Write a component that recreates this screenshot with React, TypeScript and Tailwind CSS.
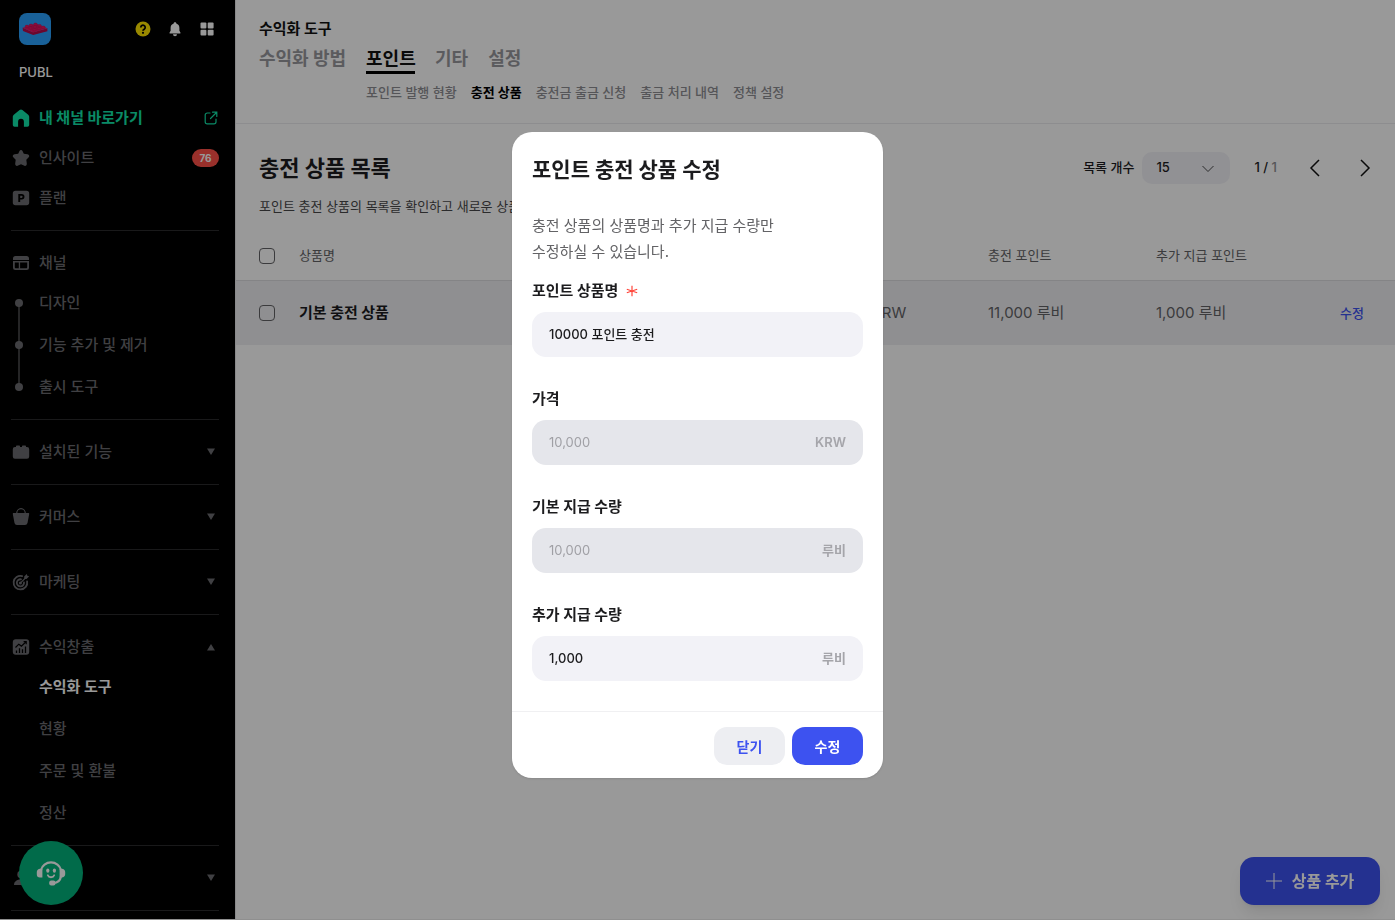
import type { ReactNode } from 'react'

type MenuItem = {
	label: string
	icon: ReactNode
	state?: 'open' | 'closed'
}

function Icon({ children }: { children: ReactNode }) {
	return (
		<svg
			viewBox="0 0 20 20"
			className="h-5 w-5 shrink-0"
			fill="currentColor"
			aria-hidden="true"
		>
			{children}
		</svg>
	)
}

const homeIcon = (
	<Icon>
		<path d="M8.600 2.100a2.200 2.200 0 0 1 2.800 0l5.500 4.300c.9.7 1.300 1.600 1.300 2.600v7.800c0 1.200-.7 1.900-1.800 1.900h-3.500v-5a2.900 2.900 0 0 0-5.800 0v5H3.600c-1.100 0-1.800-.7-1.800-1.900V9c0-1 .4-1.900 1.300-2.600z" />
	</Icon>
)

const starIcon = (
	<Icon>
		<path d="M8.500 3c.6-1.300 2.400-1.300 3 0l1.300 2.700 3.700.5c1.700.2 2.300 1.900 1.200 3.100l-2.400 2.500.5 3.700c.2 1.900-1.300 2.900-2.900 2.100L10 16.300l-2.900 1.300c-1.600.8-3.100-.2-2.900-2.100l.5-3.700-2.400-2.500C1.200 8.100 1.800 6.400 3.500 6.200l3.700-.5z" />
	</Icon>
)

const planIcon = (
	<Icon>
		<path
			fillRule="evenodd"
			d="M4.500 2.800h11a2.700 2.700 0 0 1 2.700 2.700v9a2.700 2.700 0 0 1-2.700 2.700h-11a2.700 2.700 0 0 1-2.700-2.700v-9a2.700 2.700 0 0 1 2.700-2.700zM7.300 6v8h1.900v-2.500h1.500a2.700 2.700 0 0 0 0-5.500zm1.900 1.700h1.300a1.100 1.100 0 0 1 0 2.200H9.200z"
		/>
	</Icon>
)

const channelIcon = (
	<Icon>
		<path
			fillRule="evenodd"
			d="M4.500 3h11a2.500 2.500 0 0 1 2.500 2.500V7H2V5.500A2.500 2.500 0 0 1 4.500 3zM2 8h16v6.500a2.500 2.500 0 0 1-2.500 2.500h-11A2.500 2.500 0 0 1 2 14.500zm1.800 1.500v4.700c0 .6.5 1 1 1h3V9.500zm5.300 0v5.700h6.100c.6 0 1-.5 1-1V9.500z"
		/>
	</Icon>
)

const brickIcon = (
	<Icon>
		<path d="M5 5V4.500C5 3.900 5.400 3.500 6 3.500h2c.6 0 1 .4 1 1V5h2v-.5c0-.6.4-1 1-1h2c.6 0 1 .4 1 1V5h.8A2.300 2.300 0 0 1 18.200 7.300v7.100a2.300 2.300 0 0 1-2.400 2.300H4.200a2.300 2.300 0 0 1-2.400-2.300V7.300A2.300 2.300 0 0 1 4.200 5z" />
	</Icon>
)

const basketIcon = (
	<Icon>
		<path d="M5.700 6.500a4.300 4.800 0 0 1 8.600 0" fill="none" stroke="currentColor" strokeWidth="1.200" />
		<path d="M2.600 6h14.800c.6 0 .9.500.8 1l-1.700 8.900a2.600 2.600 0 0 1-2.500 2H6a2.600 2.600 0 0 1-2.500-2L1.800 7c-.1-.5.200-1 .8-1z" />
	</Icon>
)

const targetIcon = (
	<Icon>
		<g fill="none" stroke="currentColor" strokeLinecap="round">
			<path d="M11.200 4.100a6.800 6.800 0 1 0 4.900 5.300" strokeWidth="1.800" />
			<path d="M10 7.300a3.600 3.600 0 1 0 3 3.100" strokeWidth="1.800" />
			<path d="m9.800 10.600 5-5" strokeWidth="1.300" />
		</g>
		<circle cx="9.400" cy="10.900" r="1.500" />
		<path d="m13.200 4.600 2.600-2.700.5 1.900 1.900.5-2.700 2.600-2.300-.1z" />
	</Icon>
)

const revenueIcon = (
	<Icon>
		<path d="M4.800 2.200h10.400a3 3 0 0 1 3 3v9.600a3 3 0 0 1-3 3H4.800a3 3 0 0 1-3-3V5.200a3 3 0 0 1 3-3z" />
		<g fill="none" stroke="#000" strokeWidth="1.200">
			<path d="m4.500 10.500 3.300-3.300 2.600 1.900 4.400-4.100" />
			<path d="M12.600 4.700h2.600v2.600" />
			<path d="M5.500 16v-2.500M8.500 16v-4.700M11.500 16v-3.800M14.500 16V9.500" strokeWidth="1.300" />
		</g>
	</Icon>
)

const memberIcon = (
	<Icon>
		<circle cx="10" cy="6.500" r="3.700" />
		<path d="M3 17c0-3.600 2.800-5.500 7-5.500s7 1.900 7 5.500z" />
	</Icon>
)

function MenuRow({ label, icon, state }: MenuItem) {
	return (
		<button
			type="button"
			aria-expanded={state ? state === 'open' : undefined}
			className="flex h-10 w-full items-center gap-2 text-left"
		>
			{icon}
			<span className="flex-1">{label}</span>
			{state ? (
				<svg viewBox="0 0 8 8" className="mr-1 h-2 w-2" fill="currentColor" aria-hidden="true">
					{state === 'open' ? <path d="M4 1 8 7.500H0z" /> : <path d="M0 .5h8L4 7z" />}
				</svg>
			) : null}
		</button>
	)
}

const channelLinks = ['디자인', '기능 추가 및 제거', '출시 도구']
const revenueLinks = ['수익화 도구', '현황', '주문 및 환불', '정산']
const collapsedMenus: MenuItem[] = [
	{ label: '설치된 기능', icon: brickIcon, state: 'closed' },
	{ label: '커머스', icon: basketIcon, state: 'closed' },
	{ label: '마케팅', icon: targetIcon, state: 'closed' },
]

function Sidebar() {
	return (
		<aside className="relative w-[235px] shrink-0 overflow-hidden bg-black text-[15px] font-medium text-[#6c6c70]">
			<div className="flex h-[58px] items-center pl-[19px] pr-5">
				<svg viewBox="0 0 32 32" className="h-8 w-8" role="img" aria-label="PUBL">
					<rect width="32" height="32" rx="8" fill="#2aa2ff" />
					<path d="M3.600 14.800 14 19.300 28.400 15.200v3L14.200 22 4 18z" fill="#b30d4b" />
					<path d="M3.600 14.800 17 11l11.400 4.200-14.200 4.300z" fill="#e81562" />
					<g fill="#e81562" stroke="#b8104e" strokeWidth=".4">
						<ellipse cx="8" cy="13.400" rx="1.900" ry="1.300" />
						<ellipse cx="12" cy="12.300" rx="1.900" ry="1.300" />
						<ellipse cx="16.500" cy="11.300" rx="1.900" ry="1.300" />
						<ellipse cx="11.500" cy="15" rx="1.900" ry="1.300" />
						<ellipse cx="16" cy="13.900" rx="1.900" ry="1.300" />
						<ellipse cx="20.500" cy="12.700" rx="1.900" ry="1.300" />
						<ellipse cx="15.500" cy="16.800" rx="1.900" ry="1.300" />
						<ellipse cx="20" cy="15.600" rx="1.900" ry="1.300" />
						<ellipse cx="24.300" cy="14.300" rx="1.900" ry="1.300" />
					</g>
				</svg>
				<div className="ml-auto flex gap-4">
					<button type="button" aria-label="도움말">
						<svg viewBox="0 0 16 16" className="h-4 w-4">
							<circle cx="8" cy="8" r="7.500" fill="#ffe400" />
							<path
								d="M5.800 6.400a2.200 2.200 0 1 1 3.400 1.800c-.8.5-1.200.8-1.200 1.500"
								fill="none"
								stroke="#000"
								strokeWidth="1.700"
							/>
							<circle cx="8" cy="11.800" r="1.100" />
						</svg>
					</button>
					<button type="button" aria-label="알림">
						<svg viewBox="0 0 16 16" className="h-4 w-4" fill="#fff">
							<path d="M8 1.200c.8 0 1.300.5 1.300 1.200 1.900.6 3.100 2.200 3.100 4.400v3l1 1.600c.3.500 0 1.100-.6 1.100H3.200c-.6 0-.9-.6-.6-1.100l1-1.600v-3c0-2.200 1.200-3.800 3.100-4.400 0-.7.5-1.200 1.300-1.200z" />
							<path d="M6 13.200h4a2 2 0 0 1-4 0z" />
						</svg>
					</button>
					<button type="button" aria-label="앱 목록">
						<svg viewBox="0 0 16 16" className="h-4 w-4" fill="#fff">
							<rect x="1.500" y="1.500" width="5.900" height="5.900" rx="1" />
							<rect x="8.700" y="1.500" width="5.900" height="5.900" rx="1" />
							<rect x="1.500" y="8.700" width="5.900" height="5.900" rx="1" />
							<rect x="8.700" y="8.700" width="5.900" height="5.900" rx="1" />
						</svg>
					</button>
				</div>
			</div>
			<p className="pl-[19px] text-[13px] leading-7 text-white">PUBL</p>

			<nav className="ml-[11px] mr-4 mt-3 divide-y divide-[#2b2b2c]">
				<div className="pb-3">
					<a href="#channel" className="flex h-10 items-center gap-2 font-bold text-[#12e6aa]">
						{homeIcon}
						<span className="flex-1">내 채널 바로가기</span>
						<svg
							viewBox="0 0 16 16"
							className="h-4 w-4"
							fill="none"
							stroke="currentColor"
							strokeWidth="1.200"
							strokeLinecap="round"
							aria-hidden="true"
						>
							<path d="M7 3H4.300A2.100 2.100 0 0 0 2.200 5.100v6.600c0 1.200.9 2.100 2.100 2.100h6.600c1.200 0 2.100-.9 2.100-2.100V9M9.500 2.200h4.300v4.300M13.500 2.500l-6 6" />
						</svg>
					</a>
					<a href="#insight" className="flex h-10 items-center gap-2">
						{starIcon}
						<span className="flex-1">인사이트</span>
						<span className="w-[27px] rounded-full bg-[#ff5148] text-center text-[10px] font-bold leading-[18px] text-white">
							76
						</span>
					</a>
					<a href="#plan" className="flex h-10 items-center gap-2">
						{planIcon}
						<span>플랜</span>
					</a>
				</div>

				<div className="py-3">
					<MenuRow label="채널" icon={channelIcon} />
					<ul className="relative flex flex-col gap-0.5">
						<li
							aria-hidden="true"
							className="absolute bottom-5 left-[7px] top-5 w-0.5 bg-[#3e3e40]"
						/>
						{channelLinks.map((label) => (
							<li key={label} className="flex h-10 items-center gap-4 pl-1">
								<span className="relative h-2 w-2 rounded-full bg-[#6c6c70]" />
								<a href="#channel">{label}</a>
							</li>
						))}
					</ul>
				</div>

				{collapsedMenus.map((menu) => (
					<div key={menu.label} className="py-3">
						<MenuRow {...menu} />
					</div>
				))}

				<div className="py-3">
					<MenuRow label="수익창출" icon={revenueIcon} state="open" />
					<ul className="flex flex-col gap-0.5 pl-7">
						{revenueLinks.map((label, index) => (
							<li
								key={label}
								className={`flex h-10 items-center ${index === 0 ? 'font-bold text-white' : ''}`}
							>
								<a href="#revenue">{label}</a>
							</li>
						))}
					</ul>
				</div>

				<div className="py-3">
					<MenuRow label="회원" icon={memberIcon} state="closed" />
				</div>
				<div className="py-3" />
			</nav>

			<button
				type="button"
				aria-label="고객 지원"
				className="absolute bottom-3.5 left-[19px] flex h-16 w-16 items-center justify-center rounded-full bg-[#03b27c]"
			>
				<svg viewBox="0 0 32 32" className="h-8 w-8" fill="#fff">
					<path
						d="M6 13a10.200 9.500 0 0 1 20 0M26 19.500c-.8 4.200-3.500 6.300-7.500 6.500"
						fill="none"
						stroke="#fff"
						strokeWidth="2.200"
					/>
					<path d="M7.400 11.800v8.600H5.100a3.200 3.200 0 0 1-3.300-3.200v-2.100c0-1.800 1.500-3.300 3.300-3.300zM24.600 11.800h2.300c1.800 0 3.300 1.500 3.300 3.300v2.100c0 1.800-1.500 3.200-3.300 3.200h-2.300z" />
					<rect x="14.200" y="23.400" width="6.300" height="5" rx="2" />
					<ellipse cx="12.800" cy="13.600" rx="1.600" ry="2.200" />
					<ellipse cx="19.400" cy="13.600" rx="1.600" ry="2.200" />
					<path
						d="M12.800 18.300c1 2.600 5.400 2.600 6.400 0"
						fill="none"
						stroke="#fff"
						strokeWidth="1.800"
						strokeLinecap="round"
					/>
				</svg>
			</button>
		</aside>
	)
}

const tabs = ['수익화 방법', '포인트', '기타', '설정']
const subTabs = ['포인트 발행 현황', '충전 상품', '충전금 출금 신청', '출금 처리 내역', '정책 설정']

function PageHeader() {
	return (
		<header className="border-b border-[#ececef] pb-[21px] pl-[23px] pt-[17px]">
			<h1 className="text-[15px] font-bold leading-6 text-[#111]">수익화 도구</h1>
			<nav className="mt-1.5 flex items-start gap-5 text-[18px] font-bold leading-6 text-[#98989d]">
				{tabs.map((tab) =>
					tab === '포인트' ? (
						<div key={tab} className="w-[49px]">
							<a href="#point" className="block whitespace-nowrap border-b-3 border-black text-[#111]">
								{tab}
							</a>
							<div className="mt-2 flex gap-3.5 whitespace-nowrap text-[13px] font-medium leading-5 text-[#8e8e93]">
								{subTabs.map((sub) => (
									<a
										key={sub}
										href="#sub"
										className={sub === '충전 상품' ? 'font-bold text-black' : ''}
									>
										{sub}
									</a>
								))}
							</div>
						</div>
					) : (
						<a key={tab} href="#tab">
							{tab}
						</a>
					),
				)}
			</nav>
		</header>
	)
}

function ListToolbar() {
	return (
		<div className="flex items-start justify-between pl-[23px] pr-3.5 pt-7">
			<div>
				<h2 className="text-[22px] font-bold leading-8 text-[#1c1c1e]">충전 상품 목록</h2>
				<p className="mt-3 text-[13px] leading-5 text-[#48484a]">
					포인트 충전 상품의 목록을 확인하고 새로운 상품을 추가합니다.
				</p>
			</div>
			<div className="flex h-8 items-center text-[13px] font-medium text-[#1c1c1e]">
				<label htmlFor="page-size">목록 개수</label>
				<div className="relative ml-2">
					<select
						id="page-size"
						defaultValue="15"
						className="h-8 w-[88px] appearance-none rounded-[10px] bg-[#f2f2f7] pl-3.5 outline-none"
					>
						<option value="15">15</option>
						<option value="30">30</option>
					</select>
					<svg
						viewBox="0 0 12 12"
						className="pointer-events-none absolute right-4 top-[11px] h-3 w-3"
						fill="none"
						stroke="#48484a"
						aria-hidden="true"
					>
						<path d="M.5 3 6 8.500 11.500 3" />
					</svg>
				</div>
				<p className="ml-6">
					1 / <span className="text-[#8e8e93]">1</span>
				</p>
				<button type="button" aria-label="이전" className="ml-[22px] flex h-8 w-8 items-center justify-center">
					<svg viewBox="0 0 18 18" className="h-[18px] w-[18px]" fill="none" stroke="#111" strokeWidth="1.500">
						<path d="M13 1 5 9l8 8" />
					</svg>
				</button>
				<button type="button" aria-label="다음" className="ml-[18px] flex h-8 w-8 items-center justify-center">
					<svg viewBox="0 0 18 18" className="h-[18px] w-[18px]" fill="none" stroke="#111" strokeWidth="1.500">
						<path d="m5 1 8 8-8 8" />
					</svg>
				</button>
			</div>
		</div>
	)
}

function ProductTable() {
	const checkbox = 'block h-4 w-4 appearance-none rounded border border-[#636366]'

	return (
		<table className="mt-4 w-full table-fixed text-left">
			<colgroup>
				<col className="w-[63px]" />
				<col />
				<col className="w-[168px]" />
				<col className="w-[168px]" />
				<col className="w-[184px]" />
				<col className="w-[55px]" />
			</colgroup>
			<thead>
				<tr className="h-12 border-b border-[#dcdce0] text-[13px] text-[#636366] [&>th]:font-normal">
					<th className="pl-[23px]">
						<input type="checkbox" aria-label="전체 선택" className={checkbox} />
					</th>
					<th>상품명</th>
					<th>가격</th>
					<th>충전 포인트</th>
					<th>추가 지급 포인트</th>
					<th />
				</tr>
			</thead>
			<tbody>
				<tr className="h-[65px] bg-[#efeff2] text-[15px] text-[#636366]">
					<td className="pl-[23px]">
						<input type="checkbox" aria-label="기본 충전 상품 선택" className={checkbox} />
					</td>
					<td className="font-bold text-[#1c1c1e]">기본 충전 상품</td>
					<td>10,000 KRW</td>
					<td>11,000 루비</td>
					<td>1,000 루비</td>
					<td>
						<button type="button" className="text-[13px] font-medium text-[#3d52f0]">
							수정
						</button>
					</td>
				</tr>
			</tbody>
		</table>
	)
}

type FieldProps = {
	id: string
	label: string
	value: string
	unit?: string
	required?: boolean
	disabled?: boolean
}

function Field({ id, label, value, unit, required, disabled }: FieldProps) {
	return (
		<div>
			<label
				htmlFor={id}
				className="flex items-center gap-2 text-[15px] font-bold leading-6 text-[#1c1c1e]"
			>
				{label}
				{required ? (
					<svg
						viewBox="0 0 12 12"
						className="h-3 w-3"
						stroke="#ff453a"
						strokeWidth="1.200"
						aria-hidden="true"
					>
						<path d="M6 .8v10.400M.8 4.200l10.400 3.600M11.200 4.200.8 7.800" />
					</svg>
				) : null}
			</label>
			<div
				className={`mt-[9px] flex h-[45px] items-center rounded-[14px] px-[17px] text-[13px] ${
					disabled ? 'bg-[#e5e6eb]' : 'bg-[#f2f2f7]'
				}`}
			>
				<input
					id={id}
					defaultValue={value}
					disabled={disabled}
					className="min-w-0 flex-1 bg-transparent font-medium text-[#1c1c1e] outline-none disabled:font-normal disabled:text-[#a0a0a5]"
				/>
				{unit ? <span className="font-semibold text-[#a5a5aa]">{unit}</span> : null}
			</div>
		</div>
	)
}

function EditDialog() {
	return (
		<div className="fixed inset-0 flex items-center justify-center bg-black/40 pb-2.5">
			<form
				role="dialog"
				aria-labelledby="dialog-title"
				className="w-[371px] rounded-[20px] bg-white shadow-sm"
			>
				<div className="px-5 pb-[30px] pt-[23px]">
					<h2 id="dialog-title" className="text-[21px] font-bold leading-[30px] text-[#1c1c1e]">
						포인트 충전 상품 수정
					</h2>
					<p className="mb-3.5 mt-7 text-[15px] leading-[26px] text-[#636366]">
						충전 상품의 상품명과 추가 지급 수량만
						<br />
						수정하실 수 있습니다.
					</p>
					<div className="space-y-[30px]">
						<Field id="name" label="포인트 상품명" value="10000 포인트 충전" required />
						<Field id="price" label="가격" value="10,000" unit="KRW" disabled />
						<Field id="base" label="기본 지급 수량" value="10,000" unit="루비" disabled />
						<Field id="bonus" label="추가 지급 수량" value="1,000" unit="루비" />
					</div>
				</div>
				<div className="flex justify-end gap-[7px] border-t border-[#f0f0f2] px-5 pb-[13px] pt-[15px] text-[14px] font-bold">
					<button type="button" className="h-[38px] w-[71px] rounded-[13px] bg-[#edeef2] text-[#3d52f0]">
						닫기
					</button>
					<button type="button" className="h-[38px] w-[71px] rounded-[13px] bg-[#3d52f0] text-white">
						수정
					</button>
				</div>
			</form>
		</div>
	)
}

export default function App() {
	return (
		<div className="flex h-screen border-b border-[#eee] bg-white font-['Inter','Noto_Sans_CJK_KR',sans-serif]">
			<Sidebar />
			<main className="min-w-0 flex-1 border-l border-[#e4e4e6]">
				<PageHeader />
				<ListToolbar />
				<ProductTable />
				<button
					type="button"
					className="fixed bottom-[15px] right-[15px] flex h-12 w-[140px] items-center justify-center gap-2.5 rounded-[14px] bg-[#3d52f0] text-[16px] font-bold text-white shadow-lg"
				>
					<svg viewBox="0 0 16 16" className="h-4 w-4" stroke="currentColor" aria-hidden="true">
						<path d="M8 0v16M0 8h16" />
					</svg>
					상품 추가
				</button>
			</main>
			<EditDialog />
		</div>
	)
}
